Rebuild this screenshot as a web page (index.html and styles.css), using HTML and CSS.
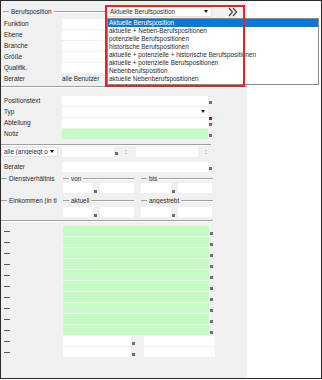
FILE: index.html
```html
<!DOCTYPE html>
<html lang="de">
<head>
    <meta charset="UTF-8">
    <title>Berufsposition</title>
    <link rel="stylesheet" href="styles.css">
</head>
<body>
<div class="win">
    <div class="panel">
        <div class="head">
            <div class="legend head-legend"><i class="dash"></i><span>Berufsposition</span><i class="rule"></i></div>
            <div class="combo combo-pos"><span>Aktuelle Berufsposition</span><b class="arrow"></b></div>
            <svg class="more" width="10" height="10" viewBox="0 0 10 10">
                <path d="M1 1 L4.5 5 L1 9 M5 1 L8.5 5 L5 9" fill="none" stroke="#444" stroke-width="1.2"/>
            </svg>
        </div>
        <div class="rows top-rows">
            <div class="row"><label>Funktion</label><span class="field"></span></div>
            <div class="row"><label>Ebene</label><span class="field"></span></div>
            <div class="row"><label>Branche</label><span class="field"></span></div>
            <div class="row"><label>Größe</label><span class="field"></span></div>
            <div class="row"><label>Qualifik.</label><span class="field"></span></div>
            <div class="row"><label>Berater</label><span class="value">alle Benutzer</span></div>
        </div>
        <div class="sep sep-full"></div>
        <div class="rows mid-rows">
            <div class="row"><label>Positionstext</label><span class="field"></span><i class="mark"></i></div>
            <div class="row"><label>Typ</label><span class="field field-drop"><b class="arrow"></b></span></div>
            <div class="row"><label>Abteilung</label><span class="field"></span><i class="mark mark-pair"></i></div>
            <div class="row"><label>Notiz</label><span class="field green"></span><i class="mark"></i></div>
        </div>
        <div class="sep sep-short"></div>
        <div class="row row-alle">
            <div class="combo combo-alle"><span>alle (angelegt o</span><b class="arrow"></b></div>
            <span class="field f-from"></span><i class="mark"></i>
            <span class="colon">:</span>
            <span class="field f-to"></span>
            <span class="colon">:</span>
        </div>
        <div class="row row-berater"><label>Berater</label><span class="field"></span><i class="mark"></i></div>
        <div class="legend-row legend-first">
            <div class="legend l-name"><i class="dash"></i><span>Dienstverhältnis</span></div>
            <div class="legend l-a"><i class="dash"></i><span>von</span><i class="rule"></i></div>
            <div class="legend l-b"><i class="dash"></i><span>bis</span><i class="rule"></i></div>
        </div>
        <div class="pair-row">
            <span class="field f-a"></span><i class="mark"></i><span class="field f-b"></span>
            <span class="field f-c"></span><i class="mark"></i><span class="field f-d"></span>
        </div>
        <div class="legend-row">
            <div class="legend l-name"><i class="dash"></i><span>Einkommen (in tl</span></div>
            <div class="legend l-a"><i class="dash"></i><span>aktuell</span><i class="rule"></i></div>
            <div class="legend l-b"><i class="dash"></i><span>angestrebt</span><i class="rule"></i></div>
        </div>
        <div class="pair-row pair-gap">
            <span class="field f-a"></span><i class="mark"></i><span class="field f-b"></span>
            <span class="field f-c"></span><i class="mark"></i><span class="field f-d"></span>
        </div>
        <div class="sep sep-bottom"></div>
        <div class="rows free-rows">
            <div class="row"><i class="stub"></i><span class="field green"></span><i class="mark"></i></div>
            <div class="row"><i class="stub"></i><span class="field green"></span><i class="mark"></i></div>
            <div class="row"><i class="stub"></i><span class="field green"></span><i class="mark"></i></div>
            <div class="row"><i class="stub"></i><span class="field green"></span><i class="mark"></i></div>
            <div class="row"><i class="stub"></i><span class="field green"></span><i class="mark"></i></div>
            <div class="row"><i class="stub"></i><span class="field green"></span><i class="mark"></i></div>
            <div class="row"><i class="stub"></i><span class="field green"></span><i class="mark"></i></div>
            <div class="row"><i class="stub"></i><span class="field green"></span><i class="mark"></i></div>
            <div class="row"><i class="stub"></i><span class="field green"></span><i class="mark"></i></div>
            <div class="row"><i class="stub"></i><span class="field green"></span><i class="mark"></i></div>
            <div class="row"><i class="stub"></i><span class="field f-half"></span><i class="mark"></i><span class="field f-rest"></span></div>
            <div class="row"><i class="stub"></i><span class="field f-half"></span><i class="mark"></i><span class="field f-rest"></span></div>
        </div>

        <!-- geöffnete Auswahlliste -->
        <ul class="list">
            <li class="on">Aktuelle Berufsposition</li>
            <li>aktuelle + Neben-Berufspositionen</li>
            <li>potenzielle Berufspositionen</li>
            <li>historische Berufspositionen</li>
            <li>aktuelle + potenzielle + historische Berufspositionen</li>
            <li>aktuelle + potenzielle Berufspositionen</li>
            <li>Nebenberufsposition</li>
            <li>aktuelle Nebenberufspositionen</li>
        </ul>
        <div class="focus"></div>
    </div>
    <div class="rest"></div>
</div>
</body>
</html>
```

FILE: styles.css
```css
*{
    margin:0;
    padding:0;
    box-sizing: border-box;
    list-style: none;
}
body{
    font-family: "Liberation Sans", Arial, sans-serif;
    font-size: 6.4px;
    color: #2a2a2a;
    background: #fff;
}
.win{
    width: 322px;
    height: 379px;
    border: 1px solid #2b2b2b;
    display: flex;
}
.panel{
    width: 246px;
    background: #f0f0f0;
    position: relative;
}
.rest{
    flex: 1;
    background: #fff;
}

/* Gruppenkopf */
.head{
    display: flex;
    align-items: center;
    height: 11px;
    margin-top: 5px;
}
.legend{
    display: flex;
    align-items: center;
    gap: 2px;
    white-space: nowrap;
    overflow: hidden;
}
.legend .dash{
    width: 6px;
    height: 1px;
    background: #a0a0a0;
    flex: none;
}
.legend .rule{
    flex: 1;
    height: 1px;
    background: #a0a0a0;
    box-shadow: 0 1px 0 #fff;
}
.head-legend{
    width: 104px;
    padding-left: 2px;
}
.combo{
    display: flex;
    align-items: center;
    height: 10px;
    background: #fff;
    border: 1px solid #e2e2e2;
    padding-left: 2px;
    white-space: nowrap;
    overflow: hidden;
}
.combo span{
    flex: 1;
    overflow: hidden;
}
.combo .arrow, .field-drop .arrow{
    width: 0;
    height: 0;
    border-left: 2.5px solid transparent;
    border-right: 2.5px solid transparent;
    border-top: 3px solid #111;
    margin-right: 3px;
}
.combo-pos{
    width: 105px;
    margin-left: 2px;
}
.more{
    margin-left: 16px;
    margin-top: 1px;
}

/* Zeilen */
.row{
    display: flex;
    align-items: center;
    height: 11px;
}
.row label{
    width: 61px;
    padding-left: 3px;
    white-space: nowrap;
}
.field{
    display: block;
    width: 146px;
    height: 10px;
    background: #fff;
}
.green{
    background: #c6fbc6;
}
.mark{
    width: 3px;
    height: 3px;
    background: #6e6e6e;
    margin-left: 1px;
    align-self: flex-end;
    margin-bottom: 2px;
}
.mark-pair{
    position: relative;
}
.mark-pair:before{
    content: "";
    position: absolute;
    left: 0;
    top: -6px;
    width: 3px;
    height: 3px;
    background: #9b1b1b;
}
.field-drop{
    display: flex;
    justify-content: flex-end;
    align-items: center;
}
.top-rows{
    margin-top: 1px;
}
.sep{
    height: 2px;
    border-top: 1px solid #a0a0a0;
    border-bottom: 1px solid #fff;
}
.sep-full{
    margin-top: 2px;
}
.mid-rows{
    margin-top: 7px;
}
.sep-short{
    width: 210px;
    margin-top: 5px;
}

/* Zeitraum */
.combo-alle{
    width: 57px;
}
.f-from{
    width: 52px;
    margin-left: 4px;
}
.colon{
    width: 6px;
    text-align: center;
    margin-left: 5px;
}
.f-to{
    width: 62px;
    margin-left: 7px;
}
.row-berater{
    margin-top: 4px;
}
.legend-row{
    display: flex;
    height: 10px;
    align-items: center;
}
.legend-first{
    margin-top: 1px;
}
.l-name{
    width: 58px;
}
.l-a{
    width: 71px;
    margin-left: 4px;
}
.l-b{
    width: 72px;
    margin-left: 7px;
}
.pair-row{
    display: flex;
    height: 10px;
    margin-bottom: 2px;
}
.pair-gap{
    margin-top: 2px;
}
.f-a{
    width: 30px;
    margin-left: 62px;
}
.f-b{
    width: 34px;
    margin-left: 3px;
}
.f-c{
    width: 30px;
    margin-left: 7px;
}
.f-d{
    width: 34px;
    margin-left: 3px;
}
.pair-row .mark{
    margin-bottom: 0;
}
.sep-bottom{
    width: 212px;
    margin-top: 3px;
}
.free-rows{
    margin-top: 4px;
}
.free-rows .row{
    align-items: stretch;
}
.free-rows .field{
    height: 11px;
    border-bottom: 1px solid #ecf9ec;
}
.free-rows .field.f-half{
    width: 68px;
    border-bottom: 1px solid #f0f0f0;
}
.free-rows .field.f-rest{
    width: 71px;
    margin-left: 9px;
    border-bottom: 1px solid #f0f0f0;
}
.stub{
    width: 62px;
    position: relative;
}
.stub:before{
    content: "";
    position: absolute;
    left: 3px;
    top: 5px;
    width: 6px;
    height: 1px;
    background: #555;
}

/* geöffnete Liste und Markierung */
.list{
    position: absolute;
    left: 106px;
    top: 17px;
    width: 212px;
    height: 67px;
    background: #fff;
    border: 1px solid #8a8a8a;
}
.list li{
    height: 8px;
    line-height: 8px;
    padding-left: 1px;
    white-space: nowrap;
}
.list li.on{
    background: #0a78d4;
    color: #fff;
}
.focus{
    position: absolute;
    left: 104px;
    top: 4px;
    width: 140px;
    height: 82px;
    border: 2px solid #e0262c;
}
```
